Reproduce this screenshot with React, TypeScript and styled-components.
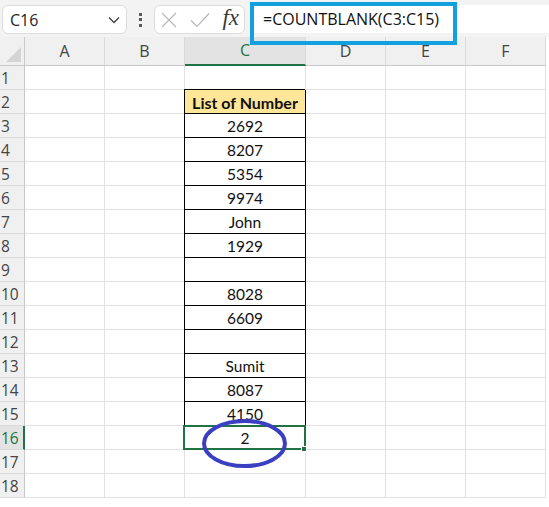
import styled, { createGlobalStyle } from 'styled-components';

const GlobalStyle = createGlobalStyle`
  html, body {
    margin: 0;
    padding: 0;
    background: #ffffff;
  }
  * {
    box-sizing: border-box;
  }
`;

const Page = styled.div`
  position: relative;
  width: 549px;
  height: 507px;
  overflow: hidden;
  background: #ffffff;
  font-family: 'Open Sans', 'Noto Sans', sans-serif;
`;

const Toolbar = styled.div`
  display: flex;
  align-items: flex-start;
  height: 37px;
  padding: 5px 0 0 2px;
  background: #f3f3f3;
`;

const Box = styled.div`
  display: flex;
  align-items: center;
  height: 29px;
  background: #ffffff;
  border: 1px solid #dcdcdc;
  border-radius: 6px;
`;

const NameBox = styled(Box)`
  width: 125px;
  padding: 0 6px 0 7px;
  justify-content: space-between;
  font-size: 16px;
  color: #1f1f1f;
`;

const Dots = styled.div`
  width: 27px;
  height: 29px;
  display: flex;
  flex-direction: column;
  align-items: center;
  justify-content: center;
  gap: 2.5px;
`;

const Dot = styled.span`
  width: 3px;
  height: 3px;
  background: #5a5a5a;
`;

const FxBox = styled(Box)`
  width: 91px;
  padding: 0 5px 0 6px;
  justify-content: space-between;
`;

const Fx = styled.span`
  font-family: 'Liberation Serif', 'DejaVu Serif', serif;
  font-style: italic;
  font-size: 23px;
  color: #3a3a3a;
  line-height: 1;
  margin-top: -4px;
`;

const Formula = styled.div`
  flex: 1;
  height: 28px;
  margin-left: 5px;
  padding-left: 13px;
  display: flex;
  align-items: center;
  background: #ffffff;
  font-size: 16px;
  color: #111111;
`;

const Highlight = styled.div`
  position: absolute;
  left: 250px;
  top: 2px;
  width: 207px;
  height: 43px;
  border: 4px solid #13a0df;
  pointer-events: none;
`;

const Sheet = styled.div`
  display: grid;
  grid-template-columns: 25px 80px 80px 121px 80px 80px 80px;
  grid-template-rows: 29px repeat(18, 24px);
`;

const Corner = styled.div`
  background: #f0f0f0;
  border-right: 1px solid #c8c8c8;
  border-bottom: 1px solid #c8c8c8;
  display: flex;
  align-items: flex-end;
  justify-content: flex-end;
  padding: 0 3px 3px 0;
`;

const ColHead = styled.div<{ $active?: boolean }>`
  display: flex;
  align-items: flex-end;
  justify-content: center;
  padding-bottom: 3px;
  background: ${(p) => (p.$active ? '#e3e3e3' : '#f0f0f0')};
  border-right: 1px solid #dadada;
  border-bottom: ${(p) => (p.$active ? '2px solid #217346' : '1px solid #c8c8c8')};
  font-size: 16px;
  color: ${(p) => (p.$active ? '#217346' : '#444444')};
`;

const RowHead = styled.div<{ $active?: boolean }>`
  display: flex;
  align-items: center;
  padding-left: 1px;
  background: ${(p) => (p.$active ? '#e3e3e3' : '#f0f0f0')};
  border-right: ${(p) => (p.$active ? '2px solid #217346' : '1px solid #c8c8c8')};
  border-bottom: 1px solid #dadada;
  font-size: 15.5px;
  color: ${(p) => (p.$active ? '#217346' : '#444444')};
`;

const Cell = styled.div<{ $boxed?: boolean; $head?: boolean; $selected?: boolean }>`
  position: relative;
  display: flex;
  align-items: center;
  justify-content: center;
  padding-top: 1px;
  border-right: 1px solid ${(p) => (p.$boxed ? '#000000' : '#e1e1e1')};
  border-bottom: 1px solid ${(p) => (p.$boxed ? '#000000' : '#e1e1e1')};
  box-shadow: ${(p) => (p.$boxed ? '-1px -1px 0 0 #000000' : 'none')};
  background: ${(p) => (p.$head ? '#ffe699' : '#ffffff')};
  font-family: Lato, 'Open Sans', sans-serif;
  font-size: ${(p) => (p.$head ? '16px' : '15.5px')};
  font-weight: ${(p) => (p.$head ? 700 : 400)};
  color: #111111;

  ${(p) =>
    p.$selected &&
    `
    &::after {
      content: '';
      position: absolute;
      top: -1px;
      left: -2px;
      right: -1px;
      bottom: -1px;
      border: 2px solid #217346;
    }
  `}
`;

const FillHandle = styled.span`
  position: absolute;
  right: -2px;
  bottom: -3px;
  width: 6px;
  height: 6px;
  background: #217346;
  border: 1px solid #ffffff;
  z-index: 2;
`;

const Annotation = styled.svg`
  position: absolute;
  left: 0;
  top: 0;
  pointer-events: none;
`;

const columns = ['A', 'B', 'C', 'D', 'E', 'F'];

const values: Record<number, string> = {
  2: 'List of Number',
  3: '2692',
  4: '8207',
  5: '5354',
  6: '9974',
  7: 'John',
  8: '1929',
  9: '',
  10: '8028',
  11: '6609',
  12: '',
  13: 'Sumit',
  14: '8087',
  15: '4150',
  16: '2',
};

const ChevronIcon = () => (
  <svg width="12" height="8" viewBox="0 0 12 8">
    <path d="M1 1.5 L6 6.5 L11 1.5" fill="none" stroke="#404040" strokeWidth="1.3" />
  </svg>
);

const CancelIcon = () => (
  <svg width="16" height="16" viewBox="0 0 16 16">
    <path d="M1 1 L15 15 M15 1 L1 15" fill="none" stroke="#b8b8b8" strokeWidth="1.2" />
  </svg>
);

const CheckIcon = () => (
  <svg width="20" height="16" viewBox="0 0 20 16">
    <path d="M1 8.5 L7 14.5 L19 1.5" fill="none" stroke="#b8b8b8" strokeWidth="1.2" />
  </svg>
);

const CornerIcon = () => (
  <svg width="15" height="15" viewBox="0 0 15 15">
    <path d="M15 0 L15 15 L0 15 Z" fill="#d4d4d4" />
  </svg>
);

export default function App() {
  const rows = Array.from({ length: 18 }, (_, i) => i + 1);

  return (
    <Page>
      <GlobalStyle />
      <Toolbar>
        <NameBox>
          <span>C16</span>
          <ChevronIcon />
        </NameBox>
        <Dots>
          <Dot />
          <Dot />
          <Dot />
        </Dots>
        <FxBox>
          <CancelIcon />
          <CheckIcon />
          <Fx>fx</Fx>
        </FxBox>
        <Formula>=COUNTBLANK(C3:C15)</Formula>
      </Toolbar>

      <Sheet>
        <Corner>
          <CornerIcon />
        </Corner>
        {columns.map((c) => (
          <ColHead key={c} $active={c === 'C'}>
            {c}
          </ColHead>
        ))}
        {rows.map((r) => (
          <Row key={r} r={r} />
        ))}
      </Sheet>

      <Highlight />
      <Annotation width="549" height="507" viewBox="0 0 549 507">
        <ellipse cx="244.5" cy="443.5" rx="40.5" ry="22.5" fill="none" stroke="#3b3fc2" strokeWidth="4" />
      </Annotation>
    </Page>
  );
}

const Row = ({ r }: { r: number }) => {
  const boxed = r >= 2 && r <= 15;
  const selected = r === 16;
  return (
    <>
      <RowHead $active={selected}>{r}</RowHead>
      {columns.map((c) =>
        c === 'C' ? (
          <Cell key={c} $boxed={boxed} $head={r === 2} $selected={selected}>
            {values[r] ?? ''}
            {selected && <FillHandle />}
          </Cell>
        ) : (
          <Cell key={c} />
        )
      )}
    </>
  );
};
